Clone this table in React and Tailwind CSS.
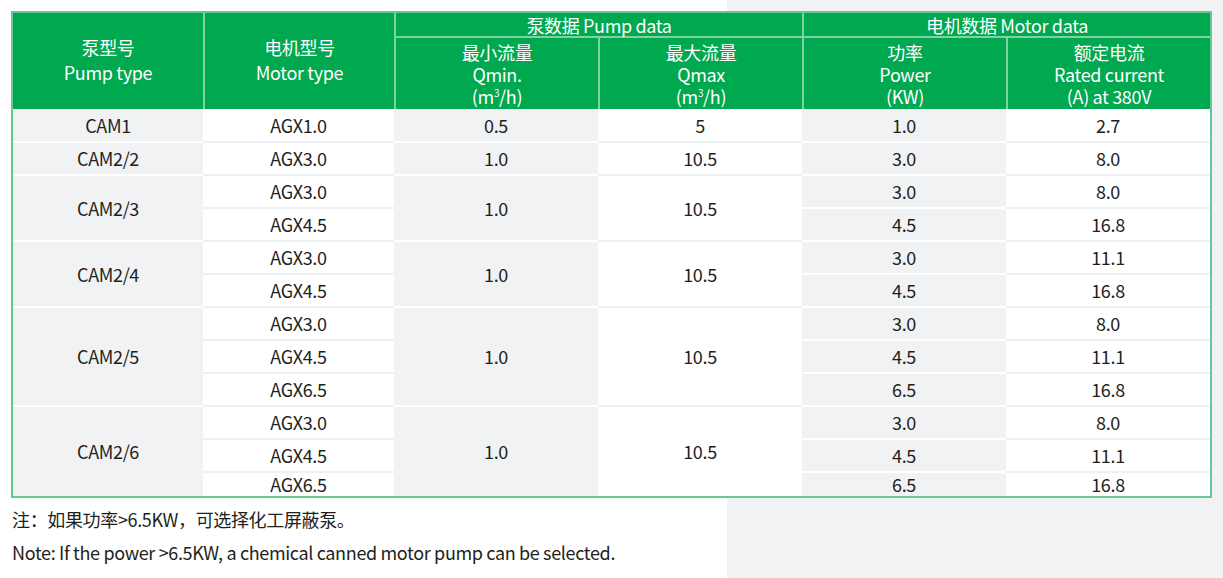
import React from "react";

const groups = [
  { pump: "CAM1", qmin: "0.5", qmax: "5", motors: [["AGX1.0", "1.0", "2.7"]] },
  { pump: "CAM2/2", qmin: "1.0", qmax: "10.5", motors: [["AGX3.0", "3.0", "8.0"]] },
  {
    pump: "CAM2/3",
    qmin: "1.0",
    qmax: "10.5",
    motors: [
      ["AGX3.0", "3.0", "8.0"],
      ["AGX4.5", "4.5", "16.8"],
    ],
  },
  {
    pump: "CAM2/4",
    qmin: "1.0",
    qmax: "10.5",
    motors: [
      ["AGX3.0", "3.0", "11.1"],
      ["AGX4.5", "4.5", "16.8"],
    ],
  },
  {
    pump: "CAM2/5",
    qmin: "1.0",
    qmax: "10.5",
    motors: [
      ["AGX3.0", "3.0", "8.0"],
      ["AGX4.5", "4.5", "11.1"],
      ["AGX6.5", "6.5", "16.8"],
    ],
  },
  {
    pump: "CAM2/6",
    qmin: "1.0",
    qmax: "10.5",
    motors: [
      ["AGX3.0", "3.0", "8.0"],
      ["AGX4.5", "4.5", "11.1"],
      ["AGX6.5", "6.5", "16.8"],
    ],
  },
];

const SPAN = { 1: "", 2: "row-span-2", 3: "row-span-3" };

function Cell({ children, gray, span = 1, last }) {
  let cls = "flex items-center justify-center text-[18px] text-[#231f20] ";
  cls += gray ? "bg-[#f1f2f4] " : "bg-white ";
  if (!last) cls += gray ? "border-b-2 border-white " : "border-b-2 border-[#eef0f2] ";
  cls += SPAN[span];
  return <div className={cls}>{children}</div>;
}

function HeadCell({ className = "", children }) {
  return (
    <div className={"flex flex-col items-center justify-center text-center text-white text-[18px] " + className}>
      {children}
    </div>
  );
}

function M3h() {
  return (
    <span>
      (m<sup className="text-[10px] -top-[7px]">3</sup>/h)
    </span>
  );
}

export default function App() {
  const cells = [];
  groups.forEach((g, gi) => {
    const lastGroup = gi === groups.length - 1;
    const n = g.motors.length;
    g.motors.forEach((m, i) => {
      const lastRow = lastGroup && i === n - 1;
      if (i === 0) {
        cells.push(
          <Cell key={`p${gi}`} gray span={n} last={lastGroup}>
            {g.pump}
          </Cell>
        );
      }
      cells.push(
        <Cell key={`m${gi}-${i}`} last={lastRow}>
          {m[0]}
        </Cell>
      );
      if (i === 0) {
        cells.push(
          <Cell key={`qn${gi}`} gray span={n} last={lastGroup}>
            {g.qmin}
          </Cell>
        );
        cells.push(
          <Cell key={`qx${gi}`} span={n} last={lastGroup}>
            {g.qmax}
          </Cell>
        );
      }
      cells.push(
        <Cell key={`w${gi}-${i}`} gray last={lastRow}>
          {m[1]}
        </Cell>
      );
      cells.push(
        <Cell key={`a${gi}-${i}`} last={lastRow}>
          {m[2]}
        </Cell>
      );
    });
  });

  return (
    <div
      className="h-[578px] w-full overflow-hidden bg-[linear-gradient(to_right,#ffffff_727px,#f1f2f4_727px)] pl-[11px] pt-[11px] tracking-[-0.35px]"
      style={{ fontFamily: '"Noto Sans CJK SC", sans-serif' }}
    >
      <div className="w-fit border-2 border-[#66c892]">
        <div className="grid grid-cols-[190px_191px_204px_204px_204px_204px] grid-rows-[25px_71px] bg-[#00a84f]">
          <HeadCell className="row-span-2 leading-[25px] pb-[2px]">
            <span>泵型号</span>
            <span>Pump type</span>
          </HeadCell>
          <HeadCell className="row-span-2 border-l-2 border-[#7fd3a3] leading-[25px] pb-[2px]">
            <span>电机型号</span>
            <span>Motor type</span>
          </HeadCell>
          <HeadCell className="col-span-2 border-l-2 border-b-2 border-[#7fd3a3] leading-none">
            泵数据 Pump data
          </HeadCell>
          <HeadCell className="col-span-2 border-l-2 border-b-2 border-[#7fd3a3] leading-none">
            电机数据 Motor data
          </HeadCell>
          <HeadCell className="border-l-2 border-[#7fd3a3] leading-[22px]">
            <span>最小流量</span>
            <span>Qmin.</span>
            <M3h />
          </HeadCell>
          <HeadCell className="border-l-2 border-[#7fd3a3] leading-[22px]">
            <span>最大流量</span>
            <span>Qmax</span>
            <M3h />
          </HeadCell>
          <HeadCell className="border-l-2 border-[#7fd3a3] leading-[22px]">
            <span>功率</span>
            <span>Power</span>
            <span>(KW)</span>
          </HeadCell>
          <HeadCell className="border-l-2 border-[#7fd3a3] leading-[22px]">
            <span>额定电流</span>
            <span>Rated current</span>
            <span>(A) at 380V</span>
          </HeadCell>
        </div>
        <div className="grid grid-cols-[190px_191px_204px_204px_204px_204px] grid-rows-[34px_33px_33px_33px_33px_33px_33px_33px_33px_33px_33px_23px]">
          {cells}
        </div>
      </div>
      <div className="pl-[1px] pt-[5px] text-[18px] leading-[33px] text-[#231f20]">
        <p>注：如果功率&gt;6.5KW，可选择化工屏蔽泵。</p>
        <p>Note: If the power &gt;6.5KW, a chemical canned motor pump can be selected.</p>
      </div>
    </div>
  );
}
